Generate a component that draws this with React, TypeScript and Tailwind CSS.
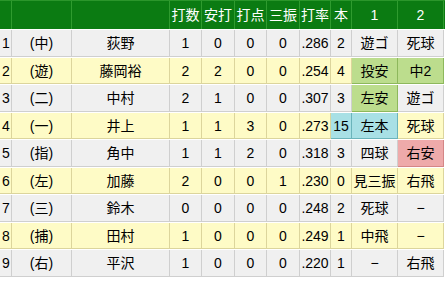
type Tone = "plain" | "hit" | "hr" | "bad";

type Row = {
  order: number;
  pos: string;
  name: string;
  stats: string[];
  avg: string;
  hr: string;
  hrTone?: Tone;
  at: [string, Tone][];
};

const widths = ["w-[12px]", "w-[60px]", "w-[98px]", "w-[32px]", "w-[33px]", "w-[32px]", "w-[33px]", "w-[31px]", "w-[21px]", "w-[46px]", "w-[46px]"];

const rows: Row[] = [
  { order: 1, pos: "(中)", name: "荻野", stats: ["1", "0", "0", "0"], avg: ".286", hr: "2", at: [["遊ゴ", "plain"], ["死球", "plain"]] },
  { order: 2, pos: "(遊)", name: "藤岡裕", stats: ["2", "2", "0", "0"], avg: ".254", hr: "4", at: [["投安", "hit"], ["中2", "hit"]] },
  { order: 3, pos: "(二)", name: "中村", stats: ["2", "1", "0", "0"], avg: ".307", hr: "3", at: [["左安", "hit"], ["遊ゴ", "plain"]] },
  { order: 4, pos: "(一)", name: "井上", stats: ["1", "1", "3", "0"], avg: ".273", hr: "15", hrTone: "hr", at: [["左本", "hr"], ["死球", "plain"]] },
  { order: 5, pos: "(指)", name: "角中", stats: ["1", "1", "2", "0"], avg: ".318", hr: "3", at: [["四球", "plain"], ["右安", "bad"]] },
  { order: 6, pos: "(左)", name: "加藤", stats: ["2", "0", "0", "1"], avg: ".230", hr: "0", at: [["見三振", "plain"], ["右飛", "plain"]] },
  { order: 7, pos: "(三)", name: "鈴木", stats: ["0", "0", "0", "0"], avg: ".248", hr: "2", at: [["死球", "plain"], ["−", "plain"]] },
  { order: 8, pos: "(捕)", name: "田村", stats: ["1", "0", "0", "0"], avg: ".249", hr: "1", at: [["中飛", "plain"], ["−", "plain"]] },
  { order: 9, pos: "(右)", name: "平沢", stats: ["1", "0", "0", "0"], avg: ".220", hr: "1", at: [["−", "plain"], ["右飛", "plain"]] },
];

const heights = ["h-[27px]", "h-[26px]", "h-[27px]", "h-[26px]", "h-[27px]", "h-[26px]", "h-[27px]", "h-[26px]", "h-[27px]"];

function Cell({ w, tone, odd, children, align = "center" }: { w: string; tone: Tone; odd: boolean; children: React.ReactNode; align?: "center" | "left" }) {
  let color = odd ? "bg-[#f0f0f0] border-[#cfcfcf]" : "bg-[#fefbc6] border-[#dcd59c]";
  if (tone === "hit") color = "bg-[#bcdd8d] border-[#8db85c]";
  if (tone === "hr") color = "bg-[#a8e0e5] border-[#6bb4bb]";
  if (tone === "bad") color = "bg-[#eeaaaa] border-[#d48686]";
  return (
    <div className={`${w} ${color} flex h-full shrink-0 items-center border-r border-b ${align === "left" ? "justify-start pl-[2px]" : "justify-center"}`}>
      {children}
    </div>
  );
}

export default function App() {
  const headers = ["", "", "", "打数", "安打", "打点", "三振", "打率", "本", "1", "2"];

  return (
    <div
      className="h-[292px] w-[446px] bg-white text-[14px] leading-none text-black"
      style={{ fontFamily: '"Liberation Sans", "Noto Sans CJK JP", sans-serif' }}
    >
      <div className="flex w-[445px] flex-col gap-px">
        {/* ヘッダー */}
        <div className="flex h-[29px] border-t border-[#2b962b] bg-[#0b7b12]">
          {headers.map((h, i) => (
            <div
              key={i}
              className={`${widths[i]} flex h-full shrink-0 items-center justify-center border-r border-[#2f9b2f] text-white`}
            >
              {h}
            </div>
          ))}
        </div>

        {rows.map((r, idx) => {
          const odd = idx % 2 === 0;
          return (
            <div key={r.order} className={`flex ${heights[idx]}`}>
              <Cell w={widths[0]} tone="plain" odd={odd} align="left">{r.order}</Cell>
              <Cell w={widths[1]} tone="plain" odd={odd}>{r.pos}</Cell>
              <Cell w={widths[2]} tone="plain" odd={odd}>{r.name}</Cell>
              {r.stats.map((s, i) => (
                <Cell key={i} w={widths[3 + i]} tone="plain" odd={odd}>{s}</Cell>
              ))}
              <Cell w={widths[7]} tone="plain" odd={odd}>{r.avg}</Cell>
              <Cell w={widths[8]} tone={r.hrTone ?? "plain"} odd={odd}>{r.hr}</Cell>
              {r.at.map(([t, tone], i) => (
                <Cell key={i} w={widths[9 + i]} tone={tone} odd={odd}>{t}</Cell>
              ))}
            </div>
          );
        })}
      </div>
    </div>
  );
}
